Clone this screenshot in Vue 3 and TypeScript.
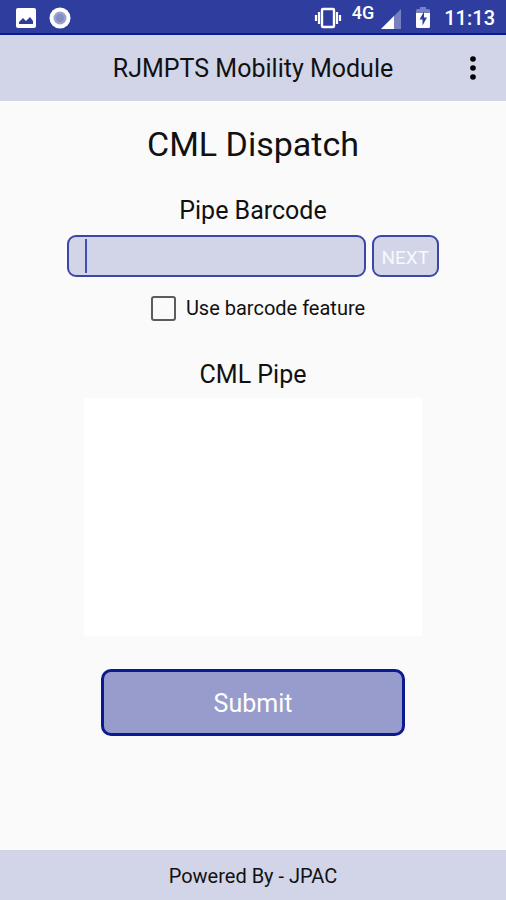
<script setup lang="ts">
import { ref } from 'vue'

const barcode = ref('')
const useBarcode = ref(false)
const pipes = ref<string[]>([])

function addPipe(): void {
  const value = barcode.value.trim()
  if (!value) return
  pipes.value.push(value)
  barcode.value = ''
}

function submit(): void {
  pipes.value = []
}
</script>

<template>
  <div class="screen">
    <div class="status">
      <div class="group notices">
        <svg width="20" height="20" viewBox="0 0 20 20">
          <rect width="20" height="20" rx="2" fill="#fff" />
          <path d="M3 16V14L7 10L10 13L14 9L17 13V16Z" fill="#2f3e9e" />
        </svg>
        <svg width="22" height="22" viewBox="0 0 22 22">
          <circle cx="11" cy="11" r="10.5" fill="#fff" />
          <circle cx="11" cy="11" r="6.5" fill="#9aa2d0" />
          <circle cx="11" cy="11" r="4" fill="#848dc2" />
        </svg>
      </div>
      <div class="group system">
        <svg width="28" height="22" viewBox="0 0 28 22">
          <rect x="8" y="2" width="12" height="18" rx="1" fill="none" stroke="#fff" stroke-width="2.4" />
          <path d="M5 5V17M2 8V14M23 5V17M26 8V14" stroke="#fff" stroke-width="2.2" />
        </svg>
        <span class="network">4G</span>
        <svg class="signal" width="20" height="20" viewBox="0 0 20 20">
          <path d="M0 20L20 0V20Z" fill="#fff" opacity=".35" />
          <path d="M0 20L13 7V20Z" fill="#fff" />
        </svg>
        <svg class="battery" width="14" height="21" viewBox="0 0 14 21">
          <path d="M0 6V3.5Q0 2 1.5 2H4V0H10V2H12.5Q14 2 14 3.5V6Z" fill="#fff" opacity=".35" />
          <path d="M0 6H14V19.5Q14 21 12.5 21H1.5Q0 21 0 19.5Z" fill="#fff" />
          <path d="M8 4.5L3.5 12.5H6.5V18.5L11 10.5H8Z" fill="#2f3e9e" />
        </svg>
        <span class="clock">11:13</span>
      </div>
    </div>

    <header class="bar">
      <span class="name">RJMPTS Mobility Module</span>
      <button class="menu" type="button" aria-label="More options">
        <svg width="6" height="24" viewBox="0 0 6 24">
          <circle cx="3" cy="3" r="2.8" />
          <circle cx="3" cy="12" r="2.8" />
          <circle cx="3" cy="21" r="2.8" />
        </svg>
      </button>
    </header>

    <main class="content">
      <h1>CML Dispatch</h1>

      <label class="heading" for="barcode">Pipe Barcode</label>
      <div class="entry">
        <div class="field">
          <input id="barcode" v-model="barcode" type="text" autocomplete="off" />
          <span v-if="!barcode" class="caret"></span>
        </div>
        <button class="next" type="button" @click="addPipe">NEXT</button>
      </div>

      <label class="option">
        <input v-model="useBarcode" type="checkbox" />
        <span>Use barcode feature</span>
      </label>

      <h2 class="heading">CML Pipe</h2>
      <ul class="pipes">
        <li v-for="(pipe, index) in pipes" :key="index">{{ pipe }}</li>
      </ul>

      <button class="submit" type="button" @click="submit">Submit</button>
    </main>

    <footer>Powered By - JPAC</footer>
  </div>
</template>

<style>
body {
  margin: 0;
  background: #fafafa;
}
</style>

<style scoped>
.screen {
  display: flex;
  flex-direction: column;
  min-height: 100vh;
  background: #fafafa;
  color: #111;
  font-family: Roboto, "Liberation Sans", sans-serif;
}

button,
input {
  box-sizing: border-box;
  margin: 0;
  font-family: inherit;
}

svg {
  display: block;
}

.status {
  display: flex;
  justify-content: space-between;
  align-items: center;
  box-sizing: border-box;
  height: 35px;
  padding: 2px 11px 0 16px;
  background: #2f3e9e;
  border-bottom: 2px solid #0c1a90;
  color: #fff;
}

.group {
  display: flex;
  align-items: center;
}

.notices {
  gap: 13px;
}

.network {
  margin: 0 7px 10px 10px;
  font-size: 18px;
  line-height: 20px;
  font-weight: 500;
}

.signal {
  margin: 2px 15px 0 0;
}

.battery {
  margin: 0 14px 0 0;
}

.clock {
  font-size: 20px;
  line-height: 24px;
  font-weight: 500;
}

.bar {
  display: grid;
  grid-template-columns: 48px 1fr 48px;
  align-items: center;
  height: 66px;
  padding: 0 9px;
  background: #d2d5e8;
}

.name {
  grid-column: 2;
  padding-top: 2px;
  font-size: 25px;
  line-height: 32px;
  text-align: center;
  white-space: nowrap;
}

.menu {
  display: flex;
  justify-content: center;
  padding: 12px;
  border: 0;
  background: none;
}

.content {
  display: flex;
  flex: 1;
  flex-direction: column;
  align-items: center;
}

h1 {
  margin: 21px 0 0;
  font-size: 34px;
  line-height: 44px;
  font-weight: 400;
}

.heading {
  margin: 0;
  font-size: 25px;
  line-height: 32px;
  font-weight: 400;
}

label.heading {
  margin-top: 29px;
}

.entry {
  display: flex;
  gap: 6px;
  width: 73.4%;
  margin-top: 8px;
}

.field {
  position: relative;
  flex: 1;
}

.field input,
.next {
  display: block;
  height: 42px;
  border: 2px solid #3c46a4;
  border-radius: 9px;
  background: #d2d5e8;
}

.field input {
  width: 100%;
  padding: 0 16px;
  color: #111;
  font-size: 20px;
}

.caret {
  position: absolute;
  top: 4px;
  bottom: 4px;
  left: 18px;
  width: 2px;
  background: #3f51b5;
  pointer-events: none;
}

.next {
  width: 67px;
  padding: 2px 0 0;
  color: #f7f8fd;
  font-size: 19px;
}

.option {
  display: flex;
  align-items: center;
  gap: 10px;
  margin-top: 18px;
  padding-left: 10px;
  font-size: 20px;
  line-height: 26px;
}

.option input {
  appearance: none;
  width: 25px;
  height: 25px;
  border: 2px solid #5c5c5c;
  border-radius: 3px;
}

.option input:checked {
  background: #3f51b5;
}

h2.heading {
  margin-top: 38px;
}

.pipes {
  box-sizing: border-box;
  width: 66.8%;
  min-height: 238px;
  margin: 7px 0 0;
  padding: 0;
  background: #fff;
  font-size: 20px;
  line-height: 26px;
  list-style: none;
}

.submit {
  width: 60%;
  height: 67px;
  margin: 33px 0;
  padding: 2px 0 0;
  border: 3px solid #0c1a90;
  border-radius: 10px;
  background: #979ccc;
  color: #fff;
  font-size: 25px;
}

footer {
  padding: 13px 12px 11px;
  background: #d2d5e8;
  font-size: 20px;
  line-height: 26px;
  text-align: center;
}
</style>
